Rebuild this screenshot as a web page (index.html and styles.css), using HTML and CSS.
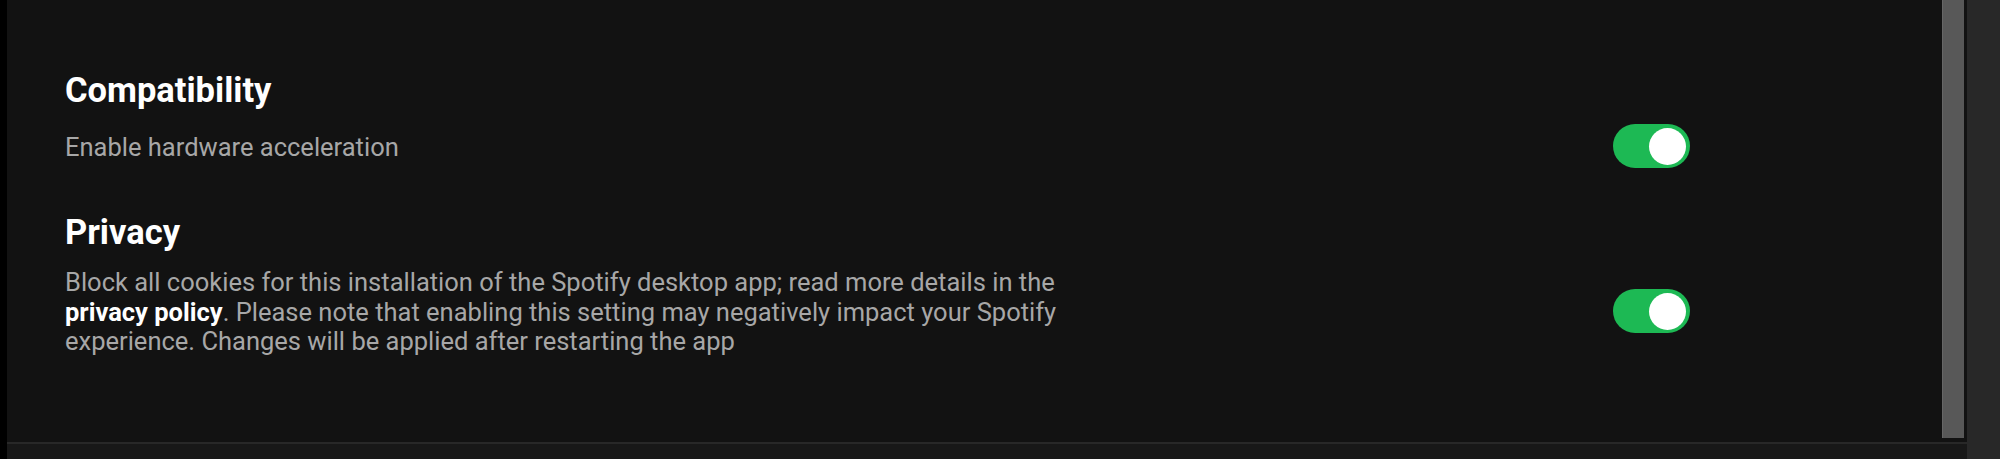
FILE: index.html
```html
<!DOCTYPE html>
<html>

<head>
    <meta charset="utf-8">
    <link rel="stylesheet" href="styles.css">
</head>

<body>
    <div class="edge"></div>
    <div class="window">
        <div class="scroller">
            <section class="settings">
                <div class="group">
                    <h2>Compatibility</h2>
                    <div class="row">
                        <p>Enable hardware acceleration</p>
                        <span class="toggle on"><span class="knob"></span></span>
                    </div>
                </div>
                <div class="group">
                    <h2>Privacy</h2>
                    <div class="row">
                        <p class="long">Block all cookies for this installation of the Spotify desktop app; read more details in the <a href="#">privacy policy</a>. Please note that enabling this setting may negatively impact your Spotify experience. Changes will be applied after restarting the app</p>
                        <span class="toggle on"><span class="knob"></span></span>
                    </div>
                </div>
            </section>
            <div class="scrollbar">
                <div class="thumb"></div>
            </div>
        </div>
        <div class="player"></div>
    </div>
    <div class="side"></div>
</body>

</html>
```

FILE: styles.css
```css
html, body {
    margin: 0;
    height: 100%;
}

body {
    display: flex;
    background: #121212;
    font-family: Roboto, 'Liberation Sans', sans-serif;
    overflow: hidden;
}

.edge {
    width: 7px;
    background: #000;
}

.side {
    width: 33px;
    background: #282828;
}

.window {
    flex: 1;
    display: flex;
    flex-direction: column;
}

.scroller {
    height: 442px;
    display: flex;
    background: #121212;
}

.settings {
    flex: 1;
    padding: 70px 0 0 58px;
}

.group {
    width: 1625px;
}

.group + .group {
    margin-top: 44px;
}

h2 {
    margin: 0 0 14px;
    color: #fff;
    font-size: 34.5px;
    line-height: 40px;
    font-weight: 700;
}

.row {
    display: flex;
    align-items: center;
    justify-content: space-between;
}

.row p {
    margin: 0;
    padding-top: 4px;
    color: #a7a7a7;
    font-size: 25.5px;
    line-height: 29.5px;
}

.row p.long {
    width: 1020px;
    padding-top: 2px;
}

.row p a {
    color: #fff;
    font-weight: 700;
    text-decoration: none;
}

.toggle {
    width: 77px;
    height: 44px;
    border-radius: 22px;
    background: #1db954;
    display: flex;
    align-items: center;
    justify-content: flex-end;
    padding: 0 4px;
    box-sizing: border-box;
}

.toggle .knob {
    width: 37px;
    height: 37px;
    border-radius: 50%;
    background: #fff;
}

.scrollbar {
    width: 25px;
}

.thumb {
    width: 22px;
    height: 438px;
    background: #585858;
    box-shadow: inset 1px 0 0 #666;
}

.player {
    flex: 1;
    border-top: 2px solid #282828;
    background: #181818;
}
```
